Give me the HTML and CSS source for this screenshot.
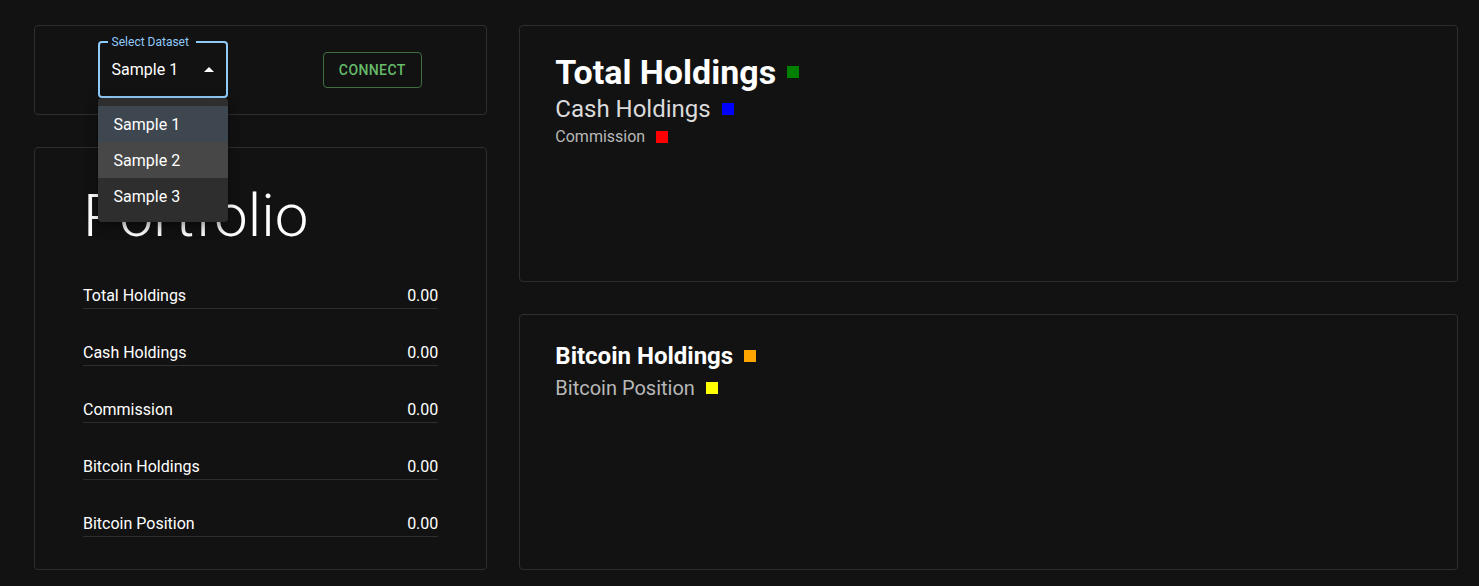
FILE: index.html
```html
<!DOCTYPE html>
<html lang="en">
<head>
  <meta charset="utf-8">
  <meta name="viewport" content="width=device-width, initial-scale=1">
  <title>Portfolio</title>
  <link rel="stylesheet" href="styles.css">
</head>
<body>
  <main class="dashboard">
    <div class="column column-side">
      <section class="card toolbar">
        <div class="field">
          <fieldset class="field-outline" aria-hidden="true"><legend>Select Dataset</legend></fieldset>
          <label class="field-label" for="dataset">Select Dataset</label>
          <select class="field-select" id="dataset">
            <option>Sample 1</option>
            <option>Sample 2</option>
            <option>Sample 3</option>
          </select>
          <svg class="field-arrow" viewBox="0 0 24 24" aria-hidden="true"><path d="M7 14l5-5 5 5z"/></svg>
          <div class="menu" role="listbox" aria-label="Select Dataset">
            <button class="menu-item is-selected" type="button" role="option" aria-selected="true">Sample 1</button>
            <button class="menu-item is-active" type="button" role="option" aria-selected="false">Sample 2</button>
            <button class="menu-item" type="button" role="option" aria-selected="false">Sample 3</button>
          </div>
        </div>
        <button class="connect" type="button">CONNECT</button>
      </section>

      <section class="card portfolio">
        <h2 class="portfolio-title">Portfolio</h2>
        <dl class="figures">
          <div class="figure"><dt>Total Holdings</dt><dd>0.00</dd></div>
          <div class="figure"><dt>Cash Holdings</dt><dd>0.00</dd></div>
          <div class="figure"><dt>Commission</dt><dd>0.00</dd></div>
          <div class="figure"><dt>Bitcoin Holdings</dt><dd>0.00</dd></div>
          <div class="figure"><dt>Bitcoin Position</dt><dd>0.00</dd></div>
        </dl>
      </section>
    </div>

    <div class="column column-main">
      <section class="card chart">
        <div class="legend legend-xl">Total Holdings<span class="swatch green"></span></div>
        <div class="legend legend-lg">Cash Holdings<span class="swatch blue"></span></div>
        <div class="legend legend-sm">Commission<span class="swatch red"></span></div>
      </section>
      <section class="card chart">
        <div class="legend legend-lg strong">Bitcoin Holdings<span class="swatch orange"></span></div>
        <div class="legend legend-md">Bitcoin Position<span class="swatch yellow"></span></div>
      </section>
    </div>
  </main>
</body>
</html>
```

FILE: styles.css
```css
*,
*::before,
*::after {
  box-sizing: border-box;
}

body {
  margin: 0;
  background: #121212;
  color: #fff;
  font-family: Roboto, "Liberation Sans", sans-serif;
  font-size: 16px;
  line-height: 24px;
}

button,
select {
  font: inherit;
  color: inherit;
}

.dashboard {
  display: grid;
  grid-template-columns: repeat(12, minmax(0, 1fr));
  gap: 32px;
  padding: 25px 21px 16px 34px;
}

.column {
  display: flex;
  flex-direction: column;
  gap: 32px;
}

.column-side {
  grid-column: span 4;
}

.column-main {
  grid-column: span 8;
}

.card {
  border: 1px solid #2e2e2e;
  border-radius: 4px;
}

/* Toolbar */
.toolbar {
  display: flex;
  align-items: center;
  justify-content: space-around;
  padding: 16px 17px 16px 15px;
}

.field {
  position: relative;
  width: 130px;
}

.field-outline {
  position: absolute;
  inset: -6px 0 0;
  margin: 0;
  padding: 0 8px;
  border: 2px solid #90caf9;
  border-radius: 4px;
  pointer-events: none;
}

.field-outline legend {
  height: 12px;
  padding: 0 6px 0 5px;
  font-size: 12px;
  line-height: 12px;
  visibility: hidden;
}

.field-label {
  position: absolute;
  top: -12px;
  left: 14px;
  color: #90caf9;
  font-size: 12px;
  white-space: nowrap;
}

.field-select {
  display: block;
  width: 100%;
  height: 56px;
  padding: 0 32px 0 14px;
  border: 0;
  outline: 0;
  background: transparent;
  appearance: none;
}

.field-arrow {
  position: absolute;
  top: 16px;
  right: 7px;
  width: 24px;
  height: 24px;
  fill: #fff;
  pointer-events: none;
}

.menu {
  position: absolute;
  top: 100%;
  left: 0;
  z-index: 1;
  width: 100%;
  padding: 8px 0;
  border-radius: 4px;
  background: #2e2e2e;
  box-shadow:
    0 5px 5px -3px rgba(0, 0, 0, 0.2),
    0 8px 10px 1px rgba(0, 0, 0, 0.14),
    0 3px 14px 2px rgba(0, 0, 0, 0.12);
}

.menu-item {
  display: block;
  width: 100%;
  padding: 7px 16px 5px;
  border: 0;
  background: transparent;
  text-align: left;
}

.menu-item.is-selected {
  background: #3e4750;
}

.menu-item.is-active {
  background: #474747;
}

.connect {
  height: 36px;
  padding: 0 15px;
  border: 1px solid #3d6f40;
  border-radius: 4px;
  background: transparent;
  color: #66bb6a;
  font-size: 14px;
  font-weight: 500;
  letter-spacing: 0.4px;
}

/* Portfolio */
.portfolio {
  padding: 32px 48px;
}

.portfolio-title {
  margin: 0 0 32px;
  font-size: 60px;
  font-weight: 300;
  line-height: 72px;
}

.figures {
  display: grid;
  gap: 32px;
  margin: 0;
}

.figure {
  display: flex;
  justify-content: space-between;
  border-bottom: 1px solid #2e2e2e;
}

.figure dd {
  margin: 0;
}

/* Charts */
.chart {
  flex: 1;
  padding: 25px 35px;
}

.legend {
  display: flex;
  align-items: center;
  gap: 11px;
}

.legend-xl {
  color: #fff;
  font-size: 34px;
  font-weight: 700;
  line-height: 42px;
}

.legend-lg {
  color: #dbdbdb;
  font-size: 24px;
  line-height: 32px;
}

.legend-md {
  color: #b8b8b8;
  font-size: 20px;
  line-height: 32px;
}

.legend-sm {
  color: #b8b8b8;
}

.legend.strong {
  color: #fff;
  font-weight: 700;
}

.swatch {
  width: 12px;
  height: 12px;
}

.green { background: #008000; }
.blue { background: #0000ff; }
.red { background: #ff0000; }
.orange { background: #ffa500; }
.yellow { background: #ffff00; }
```
